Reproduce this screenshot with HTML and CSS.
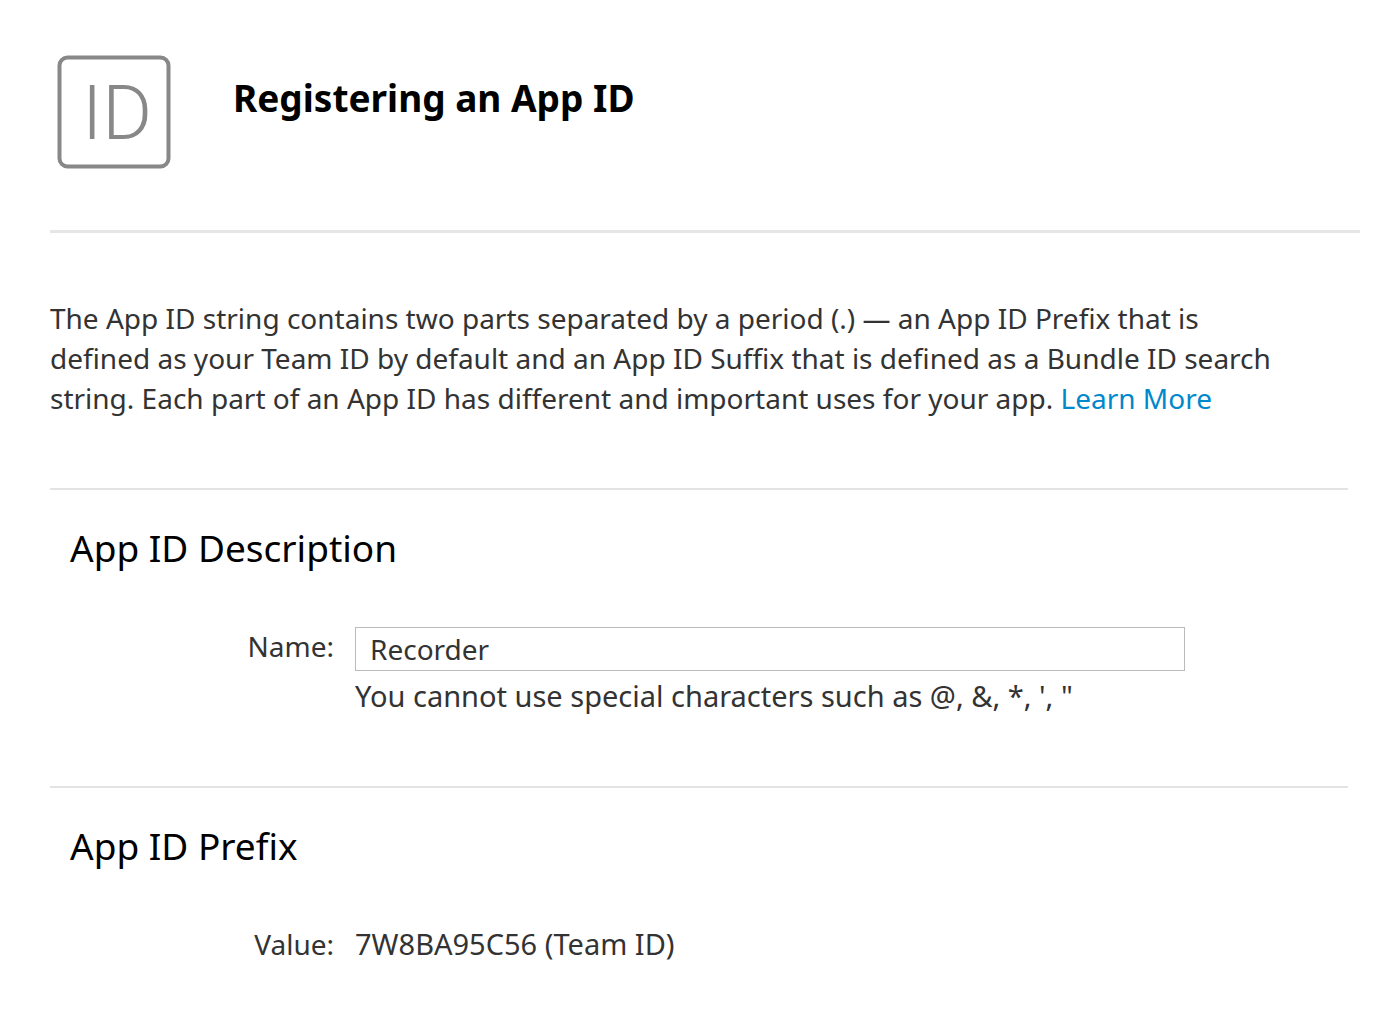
FILE: index.html
```html
<!DOCTYPE html>
<html lang="en">
<head>
<meta charset="utf-8">
<meta name="viewport" content="width=device-width, initial-scale=1">
<title>Registering an App ID</title>
<link rel="stylesheet" href="styles.css">
</head>
<body>
<main class="page">
  <header class="page-header">
    <svg class="id-icon" viewBox="0 0 114 114" aria-hidden="true">
      <rect class="id-frame" x="2.5" y="2.5" width="109" height="109" rx="8"/>
      <text class="id-text" x="60" y="84" text-anchor="middle">ID</text>
    </svg>
    <h1 class="page-title">Registering an App ID</h1>
  </header>

  <p class="intro">The App ID string contains two parts separated by a period (.) — an App ID Prefix that is defined as your Team ID by default and an App ID Suffix that is defined as a Bundle ID search string. Each part of an App ID has different and important uses for your app. <a class="link" href="#">Learn More</a></p>

  <section class="section">
    <h2 class="section-title">App ID Description</h2>
    <div class="field">
      <label class="field-label" for="name">Name:</label>
      <div class="field-body">
        <input class="text-input" id="name" type="text" value="Recorder" aria-describedby="name-hint">
        <p class="hint" id="name-hint">You cannot use special characters such as @, &amp;, *, ', "</p>
      </div>
    </div>
  </section>

  <section class="section">
    <h2 class="section-title">App ID Prefix</h2>
    <dl class="field">
      <dt class="field-label">Value:</dt>
      <dd class="field-body">7W8BA95C56 (Team ID)</dd>
    </dl>
  </section>
</main>
</body>
</html>
```
FILE: styles.css
```css
* {
  box-sizing: border-box;
}

body {
  margin: 0;
  background: #fff;
  color: #333;
  font-family: "Noto Sans", "Open Sans", sans-serif;
  font-size: 28px;
  line-height: 40px;
}

h1, h2, p, dl, dd {
  margin: 0;
}

.page {
  padding: 55px 30px 0 50px;
}

.page-header {
  display: flex;
  align-items: flex-start;
  gap: 62px;
  margin-right: -12px;
  padding: 0 0 61px 7px;
  border-bottom: 3px solid #e5e7e7;
}

.id-icon {
  flex: none;
  width: 114px;
  height: 114px;
}

.id-frame {
  fill: none;
  stroke: #888;
  stroke-width: 4px;
}

.id-text {
  fill: #888;
  font-family: Roboto, sans-serif;
  font-size: 76px;
  font-weight: 300;
}

.page-title {
  padding-top: 20px;
  color: #000;
  font-size: 37px;
  font-weight: 700;
  line-height: 46px;
}

.intro {
  padding: 65px 48px 70px 0;
}

.link {
  color: #08c;
  text-decoration: none;
}

.section {
  padding: 35px 20px 70px;
  border-top: 2px solid #e3e3e3;
}

.section-title {
  color: #000;
  font-size: 37px;
  font-weight: 400;
  line-height: 46px;
}

.field {
  display: flex;
  gap: 21px;
  padding-top: 55px;
}

.field-label {
  width: 264px;
  flex: none;
  text-align: right;
}

.field-body {
  flex: 1;
  font-size: 29px;
}

.text-input {
  display: block;
  width: 100%;
  max-width: 830px;
  height: 44px;
  margin-top: 1px;
  padding: 0 14px;
  border: 1px solid #bbb;
  border-radius: 0;
  background: #fff;
  color: #333;
  font: inherit;
  font-size: 28px;
}

.hint {
  padding-top: 5px;
}
```
